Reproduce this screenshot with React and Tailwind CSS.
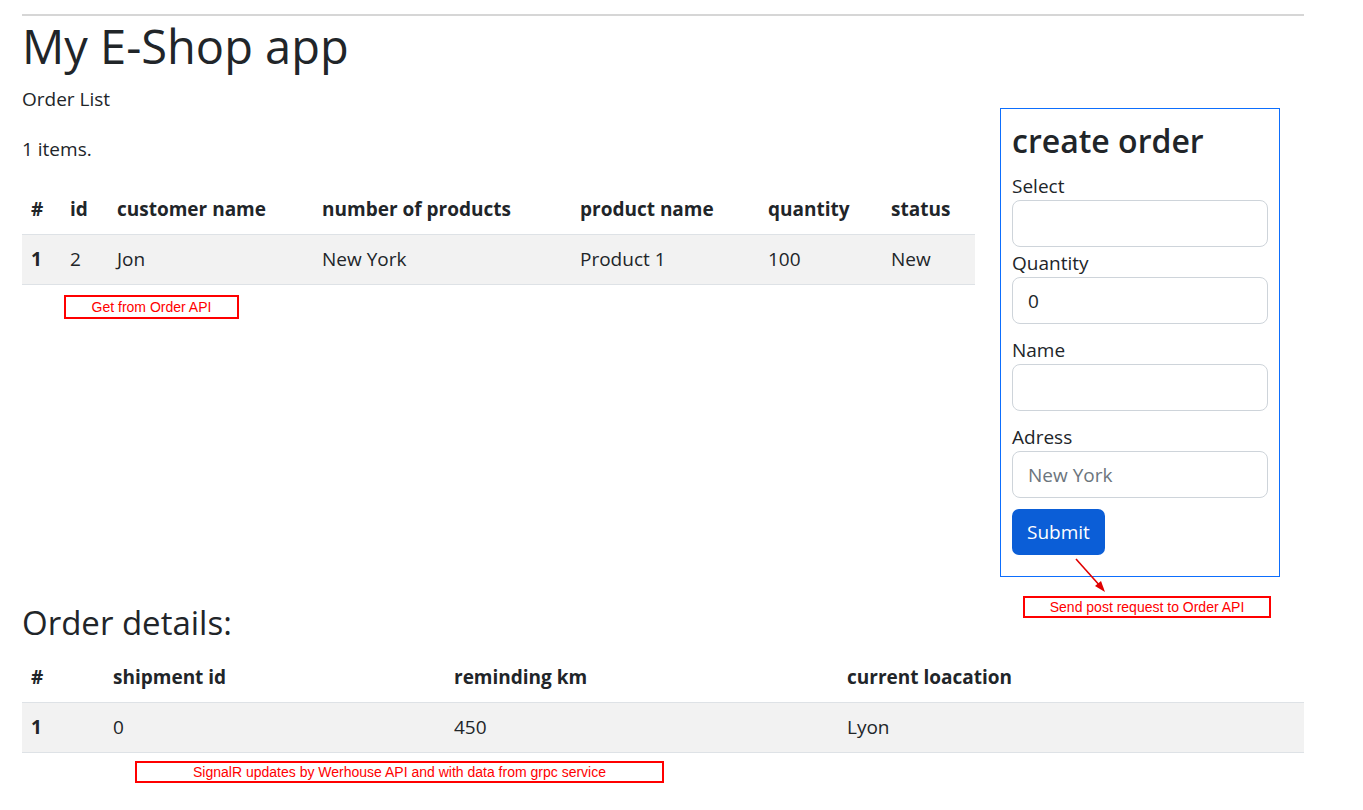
import React from 'react';

const orders = [
  { n: 1, id: 2, customer: 'Jon', products: 'New York', product: 'Product 1', quantity: 100, status: 'New' },
];

const Note = ({ className, children }) => (
  <div
    className={`border-2 border-[#ff0000] text-[#ff0000] text-[14px] leading-none flex items-center justify-center font-['Liberation_Sans',Arial,sans-serif] ${className}`}
  >
    {children}
  </div>
);

const Field = ({ label, value, placeholder, className = '' }) => (
  <div className={className}>
    <label className="block leading-[30px] h-[29px]">{label}</label>
    <input
      readOnly
      value={value}
      placeholder={placeholder}
      className="block w-full h-[47px] px-[15px] border border-[#ced4da] rounded-[8px] bg-white text-[19px] text-[#212529] placeholder:text-[#6c757d] outline-none"
    />
  </div>
);

export default function App() {
  return (
    <div className="min-h-screen bg-white text-[#212529] text-[19px] font-['Open_Sans','Noto_Sans',sans-serif]">
      <div className="ml-[22px] w-[1282px] pt-[14px]">
        <div className="h-[2px] bg-[#d6d6d6]" />
        <h1 className="text-[47px] leading-[60px] font-medium">My E-Shop app</h1>

        <div className="flex mt-[8px]">
          {/* Orders */}
          <div className="w-[953px]">
            <p className="leading-[30px] mb-[20px]">Order List</p>
            <p className="leading-[30px] mb-[20px]">1 items.</p>
            <table className="w-full table-fixed border-collapse">
              <thead>
                <tr className="border-b border-[#dee2e6] font-bold text-left">
                  <th className="w-[38px] px-[9px] py-[10px] leading-[30px]">#</th>
                  <th className="w-[47px] px-[10px] py-[10px] leading-[30px]">id</th>
                  <th className="w-[205px] px-[10px] py-[10px] leading-[30px]">customer name</th>
                  <th className="w-[258px] px-[10px] py-[10px] leading-[30px]">number of products</th>
                  <th className="w-[188px] px-[10px] py-[10px] leading-[30px]">product name</th>
                  <th className="w-[123px] px-[10px] py-[10px] leading-[30px]">quantity</th>
                  <th className="w-[94px] px-[10px] py-[10px] leading-[30px]">status</th>
                </tr>
              </thead>
              <tbody>
                {orders.map((o) => (
                  <tr key={o.id} className="bg-[#f2f2f2] border-b border-[#dee2e6]">
                    <td className="px-[9px] py-[10px] leading-[29px] font-bold">{o.n}</td>
                    <td className="px-[10px] py-[10px] leading-[29px]">{o.id}</td>
                    <td className="px-[10px] py-[10px] leading-[29px]">{o.customer}</td>
                    <td className="px-[10px] py-[10px] leading-[29px]">{o.products}</td>
                    <td className="px-[10px] py-[10px] leading-[29px]">{o.product}</td>
                    <td className="px-[10px] py-[10px] leading-[29px]">{o.quantity}</td>
                    <td className="px-[10px] py-[10px] leading-[29px]">{o.status}</td>
                  </tr>
                ))}
              </tbody>
            </table>
            <Note className="mt-[10px] ml-[42px] w-[175px] h-[24px]">Get from Order API</Note>
          </div>

          {/* Create order form */}
          <div className="ml-[25px] mt-[24px] w-[280px] h-[469px] relative border border-[#0d6efd] pt-[11px] px-[11px]">
            <h3 className="text-[32px] leading-[42px] font-semibold mb-[9px]">create order</h3>
            <Field label="Select" value="" />
            <Field label="Quantity" value="0" className="mt-px" />
            <Field label="Name" value="" className="mt-[11px]" />
            <Field label="Adress" value="" placeholder="New York" className="mt-[11px]" />
            <button className="mt-[11px] h-[46px] px-[15px] rounded-[7px] bg-[#0b5ed7] text-white text-[19px]">
              Submit
            </button>

            <svg className="absolute left-[70px] top-[445px] overflow-visible" width="40" height="42" viewBox="0 0 40 42">
              <line x1="5" y1="5" x2="30" y2="33" stroke="#e00000" strokeWidth="1.6" />
              <polygon points="34,38 24,32 30,27" fill="#e00000" />
            </svg>
            <Note className="absolute left-[22px] top-[487px] w-[248px] h-[22px]">Send post request to Order API</Note>
          </div>
        </div>

        {/* Details */}
        <h3 className="mt-[25px] text-[33px] leading-[42px] font-medium mb-[8px]">Order details:</h3>
        <table className="w-full table-fixed border-collapse">
          <thead>
            <tr className="border-b border-[#dee2e6] font-bold text-left">
              <th className="w-[81px] px-[9px] py-[10px] leading-[30px]">#</th>
              <th className="w-[341px] px-[10px] py-[10px] leading-[30px]">shipment id</th>
              <th className="w-[393px] px-[10px] py-[10px] leading-[30px]">reminding km</th>
              <th className="w-[467px] px-[10px] py-[10px] leading-[30px]">current loacation</th>
            </tr>
          </thead>
          <tbody>
            <tr className="bg-[#f2f2f2] border-b border-[#dee2e6]">
              <td className="px-[9px] py-[10px] leading-[29px] font-bold">1</td>
              <td className="px-[10px] py-[10px] leading-[29px]">0</td>
              <td className="px-[10px] py-[10px] leading-[29px]">450</td>
              <td className="px-[10px] py-[10px] leading-[29px]">Lyon</td>
            </tr>
          </tbody>
        </table>
        <Note className="mt-[8px] ml-[113px] w-[529px] h-[22px]">
          SignalR updates by Werhouse API and with data from grpc service
        </Note>
      </div>
    </div>
  );
}
